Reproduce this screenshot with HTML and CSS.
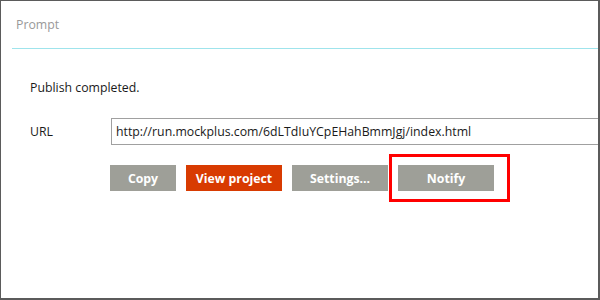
FILE: index.html
```html
<!DOCTYPE html>
<html lang="en">
<head>
    <meta charset="UTF-8">
    <title>Prompt</title>
    <link rel="stylesheet" href="styles.css">
</head>
<body>

    <div class="dialog">
        <div class="dialog-header">Prompt</div>

        <div class="dialog-body">
            <p class="message">Publish completed.</p>

            <div class="url-row">
                <label for="url">URL</label>
                <input type="text" id="url" value="http://run.mockplus.com/6dLTdIuYCpEHahBmmJgj/index.html" readonly>
            </div>

            <div class="actions">
                <button class="btn">Copy</button>
                <button class="btn btn-primary">View project</button>
                <button class="btn btn-wide">Settings...</button>
                <button class="btn btn-wide">Notify</button>
            </div>
        </div>

        <div class="highlight"></div>
    </div>

</body>
</html>
```

FILE: styles.css
```css
body {
    margin: 0;
    font-family: "Open Sans", "Noto Sans", sans-serif;
    font-size: 12.3px;
    color: #1a1a1a;
    background: #fff;
}

.dialog {
    position: relative;
    width: 600px;
    height: 300px;
    box-sizing: border-box;
    border: 1px solid #5b5b5b;
    border-right-width: 2px;
    border-bottom-width: 2px;
    overflow: hidden;
}

.dialog-header {
    display: flex;
    align-items: center;
    height: 47px;
    margin-left: 11px;
    padding-left: 4px;
    border-bottom: 1px solid #9fe4ec;
    color: #999;
}

.dialog-body {
    padding: 30px 0 0 29px;
}

.message {
    margin: 0;
    line-height: 18px;
}

.url-row {
    display: flex;
    align-items: center;
    margin-top: 21px;
}

.url-row label {
    width: 81px;
    flex-shrink: 0;
}

.url-row input {
    flex: 1;
    height: 27px;
    box-sizing: border-box;
    margin-right: -20px;
    padding: 0 4px;
    border: 1px solid #a0a0a0;
    font-family: inherit;
    font-size: 12.3px;
    color: #1a1a1a;
    outline: none;
}

.actions {
    display: flex;
    gap: 10px;
    margin-top: 20px;
    margin-left: 80px;
}

.btn {
    width: 66px;
    height: 26px;
    padding: 0;
    border: none;
    background-color: #9e9f98;
    color: #fff;
    font-family: inherit;
    font-size: 12.3px;
    font-weight: bold;
    cursor: pointer;
}

.btn-primary,
.btn-wide {
    width: 96px;
}

.btn-primary {
    background-color: #d83b01;
}

.highlight {
    position: absolute;
    left: 388px;
    top: 153px;
    width: 115px;
    height: 42px;
    border: 3px solid #ff0000;
}
```
